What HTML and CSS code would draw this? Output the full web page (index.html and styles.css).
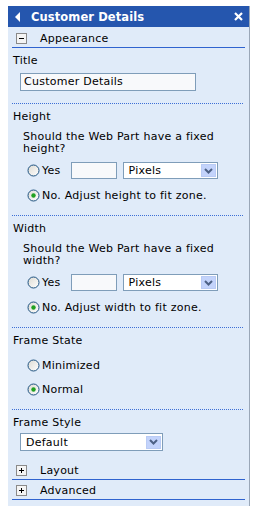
FILE: index.html
```html
<!DOCTYPE html>
<html>
<head>
<meta charset="utf-8">
<link rel="stylesheet" href="styles.css">
</head>
<body>
<div class="panel">
  <div class="header">
    <svg class="back" width="6" height="10" viewBox="0 0 6 10"><path d="M5 0 L5 10 L0 5 Z" fill="#fff"/></svg>
    <span class="title">Customer Details</span>
    <svg class="close" width="9" height="9" viewBox="0 0 9 9"><path d="M1 1 L8 8 M8 1 L1 8" stroke="#fff" stroke-width="2.2"/></svg>
  </div>
  <div class="body">
    <div class="cat">
      <span class="box">
        <svg width="11" height="11" viewBox="0 0 11 11"><rect x="0.5" y="0.5" width="10" height="10" fill="#f4f4f4" stroke="#8a8a8a"/><path d="M3 5.5 H8" stroke="#000"/></svg>
      </span>
      <span class="cat-name">Appearance</span>
    </div>

    <div class="group">
      <div class="label">Title</div>
      <div class="field text-wide">Customer Details</div>
    </div>

    <div class="group">
      <div class="label">Height</div>
      <div class="question">Should the Web Part have a fixed height?</div>
      <div class="row yes-row">
        <svg class="radio" width="13" height="13" viewBox="0 0 13 13"><defs><linearGradient id="g1" x1="0" y1="0" x2="1" y2="1"><stop offset="0" stop-color="#dcdad2"/><stop offset="1" stop-color="#ffffff"/></linearGradient></defs><circle cx="6.5" cy="6.5" r="5.5" fill="url(#g1)" stroke="#1d5281"/></svg>
        <span class="opt">Yes</span>
        <div class="field small"></div>
        <div class="select sel-px"><span>Pixels</span><span class="btn"><svg width="9" height="6" viewBox="0 0 9 6"><path d="M1 1 L4.5 4.5 L8 1" fill="none" stroke="#4d6185" stroke-width="2"/></svg></span></div>
      </div>
      <div class="row no-row">
        <svg class="radio" width="13" height="13" viewBox="0 0 13 13"><circle cx="6.5" cy="6.5" r="5.5" fill="url(#g1)" stroke="#1d5281"/><circle cx="6.5" cy="6.5" r="2.2" fill="#21a121"/></svg>
        <span class="opt">No. Adjust height to fit zone.</span>
      </div>
    </div>

    <div class="group">
      <div class="label">Width</div>
      <div class="question">Should the Web Part have a fixed width?</div>
      <div class="row yes-row">
        <svg class="radio" width="13" height="13" viewBox="0 0 13 13"><circle cx="6.5" cy="6.5" r="5.5" fill="url(#g1)" stroke="#1d5281"/></svg>
        <span class="opt">Yes</span>
        <div class="field small"></div>
        <div class="select sel-px"><span>Pixels</span><span class="btn"><svg width="9" height="6" viewBox="0 0 9 6"><path d="M1 1 L4.5 4.5 L8 1" fill="none" stroke="#4d6185" stroke-width="2"/></svg></span></div>
      </div>
      <div class="row no-row">
        <svg class="radio" width="13" height="13" viewBox="0 0 13 13"><circle cx="6.5" cy="6.5" r="5.5" fill="url(#g1)" stroke="#1d5281"/><circle cx="6.5" cy="6.5" r="2.2" fill="#21a121"/></svg>
        <span class="opt">No. Adjust width to fit zone.</span>
      </div>
    </div>

    <div class="group">
      <div class="label">Frame State</div>
      <div class="row state-row first">
        <svg class="radio" width="13" height="13" viewBox="0 0 13 13"><circle cx="6.5" cy="6.5" r="5.5" fill="url(#g1)" stroke="#1d5281"/></svg>
        <span class="opt">Minimized</span>
      </div>
      <div class="row state-row">
        <svg class="radio" width="13" height="13" viewBox="0 0 13 13"><circle cx="6.5" cy="6.5" r="5.5" fill="url(#g1)" stroke="#1d5281"/><circle cx="6.5" cy="6.5" r="2.2" fill="#21a121"/></svg>
        <span class="opt">Normal</span>
      </div>
    </div>

    <div class="group last">
      <div class="label">Frame Style</div>
      <div class="select sel-style"><span>Default</span><span class="btn"><svg width="9" height="6" viewBox="0 0 9 6"><path d="M1 1 L4.5 4.5 L8 1" fill="none" stroke="#4d6185" stroke-width="2"/></svg></span></div>
    </div>

    <div class="cat">
      <span class="box">
        <svg width="11" height="11" viewBox="0 0 11 11"><rect x="0.5" y="0.5" width="10" height="10" fill="#f4f4f4" stroke="#8a8a8a"/><path d="M3 5.5 H8 M5.5 3 V8" stroke="#000"/></svg>
      </span>
      <span class="cat-name">Layout</span>
    </div>
    <div class="cat">
      <span class="box">
        <svg width="11" height="11" viewBox="0 0 11 11"><rect x="0.5" y="0.5" width="10" height="10" fill="#f4f4f4" stroke="#8a8a8a"/><path d="M3 5.5 H8 M5.5 3 V8" stroke="#000"/></svg>
      </span>
      <span class="cat-name">Advanced</span>
    </div>
  </div>
</div>
</body>
</html>
```
FILE: styles.css
```css
html, body {
  margin: 0;
  padding: 0;
  background: #ffffff;
}
body {
  font-family: "DejaVu Sans", Verdana, sans-serif;
  font-size: 11px;
  letter-spacing: 0.25px;
  color: #000;
}
.panel {
  margin: 6px 0 0 8px;
  width: 242px;
  height: 500px;
  background: #e0ebf9;
  border-right: 1px solid #9aa7b8;
  box-sizing: border-box;
}
.header {
  height: 21px;
  background: #2556ae;
  color: #fff;
  display: flex;
  align-items: center;
  padding: 0 6px 0 7px;
}
.back { margin-right: 10px; }
.title {
  font-weight: bold;
  font-size: 11.5px;
  letter-spacing: 0.1px;
  flex: 1;
}
.body {
  padding: 3px 4px 0 4px;
}
.cat {
  height: 17px;
  border-bottom: 1px solid #2f63cf;
  display: flex;
  align-items: center;
  padding-left: 4px;
}
.cat + .cat { margin-top: 2px; }
.box { display: flex; width: 11px; height: 11px; margin-right: 13px; }
.group {
  padding: 6px 0 12px 1px;
  border-bottom: 1px dotted #3d6fd6;
  margin-right: 2px;
}
.group.last { border-bottom: none; padding-bottom: 11px; }
.label { line-height: 14px; }
.field {
  background: #f8f9fb;
  border: 1px solid #7f9db9;
  box-sizing: border-box;
  height: 18px;
  line-height: 16px;
  padding-left: 3px;
}
.text-wide {
  width: 176px;
  margin: 5px 0 0 7px;
}
.question {
  margin: 7px 0 0 10px;
  line-height: 12px;
  width: 205px;
}
.row {
  display: flex;
  align-items: center;
  margin-left: 14px;
}
.yes-row { margin-top: 7px; height: 17px; }
.no-row { margin-top: 8px; height: 16px; }
.state-row { margin-top: 8px; height: 16px; }
.state-row.first { margin-top: 9px; }
.radio { flex: none; margin-right: 2px; }
.yes-row .opt { margin-right: 10px; }
.field.small {
  width: 46px;
  height: 17px;
  margin-right: 6px;
}
.select {
  border: 1px solid #7f9db9;
  background: #fff;
  box-sizing: border-box;
  display: flex;
  align-items: center;
  justify-content: space-between;
  padding: 0 1px 0 5px;
}
.sel-px { width: 95px; height: 17px; }
.sel-style { width: 143px; height: 18px; margin: 3px 0 0 7px; }
.btn {
  width: 15px;
  height: 13px;
  background: #c3d3fb;
  border: 1px solid #b9cbf5;
  box-sizing: border-box;
  display: flex;
  align-items: center;
  justify-content: center;
}
```
